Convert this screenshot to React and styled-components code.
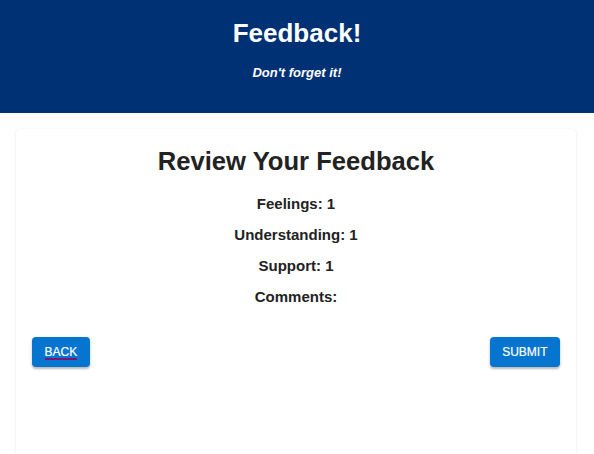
import React from "react"
import styled, { createGlobalStyle } from "styled-components"

const GlobalStyle = createGlobalStyle`
  body {
    margin: 0;
    background: #ffffff;
    font-family: "Liberation Sans", Arial, sans-serif;
    color: #222222;
    overflow: hidden;
  }
`

const Header = styled.header`
  background: #003174;
  color: #ffffff;
  text-align: center;
  padding: 18px 0 32px;
`

const Title = styled.h1`
  margin: 0;
  font-size: 26px;
  line-height: 30px;
  font-weight: 700;
`

const Tagline = styled.h4`
  margin: 17px 0 0;
  font-size: 13px;
  line-height: 16px;
  font-weight: 700;
  font-style: italic;
`

const Card = styled.section`
  box-sizing: border-box;
  margin: 16px 18px 0 16px;
  min-height: 330px;
  background: #ffffff;
  border-radius: 4px;
  box-shadow: 0 1px 3px rgba(0, 0, 0, 0.08), 0 0 1px rgba(0, 0, 0, 0.1);
  padding: 17px 16px 0;
  text-align: center;
`

const Heading = styled.h2`
  margin: 0;
  font-size: 25.6px;
  line-height: 30px;
  font-weight: 700;
  color: #222222;
`

const Summary = styled.div`
  display: flex;
  flex-direction: column;
  gap: 13px;
  margin-top: 19px;
`

const Line = styled.p`
  margin: 0;
  font-size: 15px;
  line-height: 18px;
  font-weight: 700;
`

const Actions = styled.div`
  display: flex;
  justify-content: space-between;
  margin-top: 31px;
`

const Button = styled.button`
  display: flex;
  align-items: center;
  height: 30px;
  padding: 0 12.5px;
  border: none;
  border-radius: 4px;
  background: #0575d0;
  color: #ffffff;
  font-family: "Liberation Sans", Arial, sans-serif;
  font-size: 12px;
  text-transform: uppercase;
  -webkit-text-stroke: 0.2px #ffffff;
  box-shadow: 0 2px 2px rgba(0, 0, 0, 0.22), 0 1px 4px rgba(0, 0, 0, 0.1);
  cursor: pointer;
`

const Label = styled.span`
  display: inline-block;
  line-height: 12px;
  padding-top: 2px;
  border-bottom: 2px solid ${props => (props.$underline ? "#7d1470" : "transparent")};
`

const answers = [
  { label: "Feelings", value: 1 },
  { label: "Understanding", value: 1 },
  { label: "Support", value: 1 },
  { label: "Comments", value: "" },
]

const App = () => (
  <>
    <GlobalStyle />
    <Header>
      <Title>Feedback!</Title>
      <Tagline>Don't forget it!</Tagline>
    </Header>
    <Card>
      <Heading>Review Your Feedback</Heading>
      <Summary>
        {answers.map(item => (
          <Line key={item.label}>
            {item.label}: {item.value}
          </Line>
        ))}
      </Summary>
      <Actions>
        <Button>
          <Label $underline>Back</Label>
        </Button>
        <Button>
          <Label>Submit</Label>
        </Button>
      </Actions>
    </Card>
  </>
)

export default App
